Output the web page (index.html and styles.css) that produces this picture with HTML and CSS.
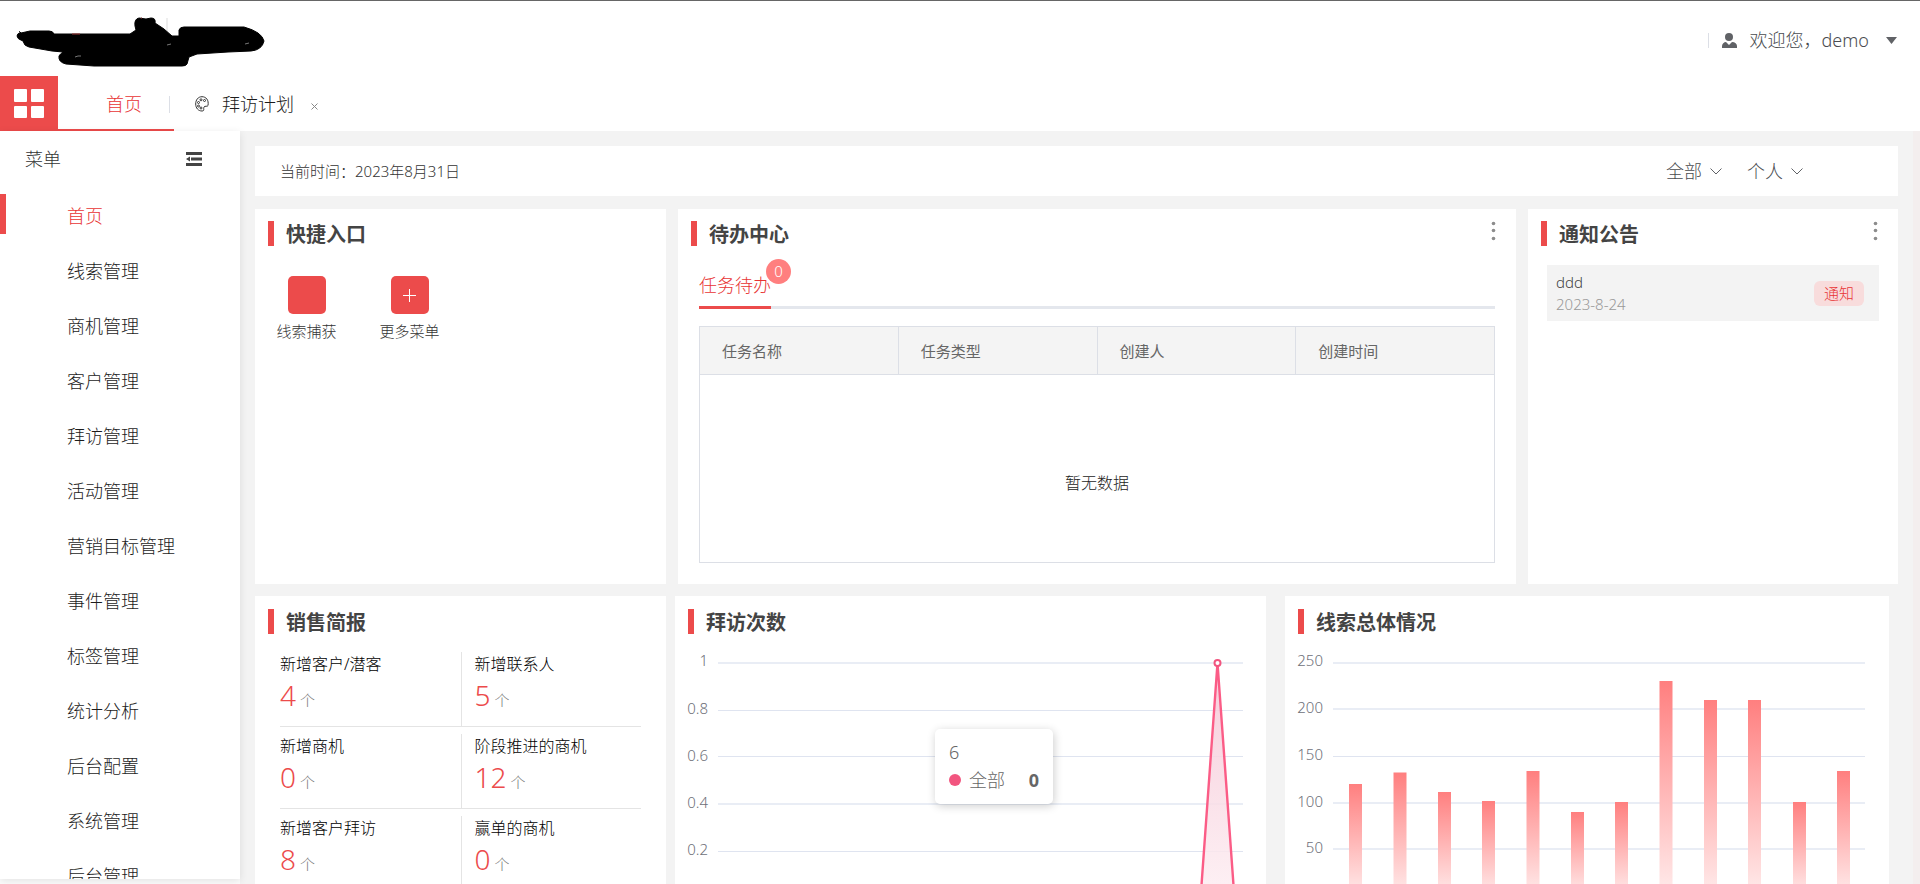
FILE: index.html
```html
<!DOCTYPE html>
<html lang="zh-CN">
<head>
<meta charset="utf-8">
<title>首页</title>
<link rel="stylesheet" href="styles.css">
</head>
<body>
<header class="header">
  <svg class="logo" width="250" height="54" viewBox="0 0 250 54" aria-hidden="true">
    <path d="M151 4v20" stroke="#ddd"/>
    <path d="M5 19Q1 16 5 19L14 17L33 17Q37 17 38 20L114 20L120 16L119 12Q118 5 123 4L130 5L135 4Q140 4 139 9L148 15L156 22L163 22L163 16Q164 13 168 13L228 13Q246 18 248 27Q246 36 235 37L212 38L181 40L173 43L171 50Q170 52 166 52L78 52L50 50Q42 48 43 42Q44 40 47 38L36 37L13 33Q8 32 7 27Q1 25 1 22Q1 19 5 19Z" fill="#000" stroke="#000" stroke-width="1"/>
    <path d="M59 43l3-1h3M151 31l4-1M229 30l4-1" stroke="#777" fill="none"/>
    <path d="M125 4h1M56 20h8" stroke="#933" fill="none"/>
  </svg>
  <button class="user" type="button">
    <svg width="15" height="15" viewBox="0 0 15 15" aria-hidden="true"><circle cx="7" cy="4" r="4"/><path d="M0 15v-2c0-2 2-4 4-4l3 3 3-3c3 0 5 2 5 4v2z"/></svg>
    <span>欢迎您，demo</span>
    <svg class="caret" width="11" height="7" viewBox="0 0 11 7" aria-hidden="true"><path d="M0 0h11L5.500 7z"/></svg>
  </button>
</header>
<nav class="tabs" aria-label="标签页">
  <button class="apps" type="button" aria-label="应用">
    <svg width="30" height="30" viewBox="0 0 30 30"><g fill="#fff"><rect width="13" height="13" rx="1"/><rect x="17" width="13" height="13" rx="1"/><rect y="17" width="13" height="12" rx="1"/><rect x="17" y="17" width="13" height="12" rx="1"/></g></svg>
  </button>
  <a class="tab tab-active" href="#home">首页</a>
  <a class="tab" href="#plan">
    <svg width="14" height="16" viewBox="0 0 14 16" fill="none" stroke="#333" aria-hidden="true"><path d="M13 9.500C14 4 11 .7 7 .7S.7 4 .7 8s2.500 7 6.300 7c3 0 1-2.500 2-4s3.500 0 4-1.500z"/><circle cx="3.500" cy="6.500" r="1"/><circle cx="6" cy="3.800" r="1"/><circle cx="9.500" cy="4.500" r="1"/><circle cx="3.500" cy="10" r="1"/><circle cx="6" cy="12" r="1"/></svg>
    <span>拜访计划</span>
  </a>
  <button class="close" type="button" aria-label="关闭"><svg width="7" height="7" viewBox="0 0 7 7"><path d="M.5.5l6 6m0-6l-6 6" stroke="#888"/></svg></button>
</nav>
<div class="body">
  <aside class="sidebar">
    <div class="side-head">
      <span>菜单</span>
      <button type="button" class="fold" aria-label="折叠菜单"><svg width="16" height="14" viewBox="0 0 16 14" fill="#444"><path d="M0 0h16v3H0zM5 5.500h11v3H5zM0 11h16v3H0zM0 7l4-2.500v5z"/></svg></button>
    </div>
    <nav class="menu">
      <a class="active" href="#1">首页</a>
      <a href="#2">线索管理</a>
      <a href="#3">商机管理</a>
      <a href="#4">客户管理</a>
      <a href="#5">拜访管理</a>
      <a href="#6">活动管理</a>
      <a href="#7">营销目标管理</a>
      <a href="#8">事件管理</a>
      <a href="#9">标签管理</a>
      <a href="#10">统计分析</a>
      <a href="#11">后台配置</a>
      <a href="#12">系统管理</a>
      <a href="#13">后台管理</a>
    </nav>
  </aside>
  <main class="main">
    <div class="filter">
      <span>当前时间：2023年8月31日</span>
      <div class="filter-tools">
        <label class="pick"><select aria-label="范围"><option>全部</option></select><svg width="12" height="7" viewBox="0 0 12 7"><path d="M.5.5L6 6 11.500.5"/></svg></label>
        <label class="pick"><select aria-label="对象"><option>个人</option></select><svg width="12" height="7" viewBox="0 0 12 7"><path d="M.5.5L6 6 11.500.5"/></svg></label>
      </div>
    </div>
    <div class="row row-top">
      <section class="card">
        <h2 class="title">快捷入口</h2>
        <div class="quick">
          <button type="button"><span class="tile"></span>线索捕获</button>
          <button type="button"><span class="tile"><svg width="13" height="13" viewBox="0 0 13 13"><path d="M6.500 0v13M0 6.500h13" stroke="#fff"/></svg></span>更多菜单</button>
        </div>
      </section>
      <section class="card">
        <div class="card-head"><h2 class="title">待办中心</h2>
          <button class="more" type="button" aria-label="更多"><svg width="5" height="20" viewBox="0 0 5 20" fill="#8c8c8c"><circle cx="2.500" cy="2.500" r="1.800"/><circle cx="2.500" cy="9.500" r="1.800"/><circle cx="2.500" cy="17.500" r="1.800"/></svg></button></div>
        <div class="todo">
          <div class="todo-tabs"><button class="todo-tab" type="button">任务待办<span class="badge">0</span></button></div>
          <table class="table">
            <thead><tr><th>任务名称</th><th>任务类型</th><th>创建人</th><th>创建时间</th></tr></thead>
            <tbody><tr><td colspan="4">暂无数据</td></tr></tbody>
          </table>
        </div>
      </section>
      <section class="card">
        <div class="card-head"><h2 class="title">通知公告</h2>
          <button class="more" type="button" aria-label="更多"><svg width="5" height="20" viewBox="0 0 5 20" fill="#8c8c8c"><circle cx="2.500" cy="2.500" r="1.800"/><circle cx="2.500" cy="9.500" r="1.800"/><circle cx="2.500" cy="17.500" r="1.800"/></svg></button></div>
        <a class="notice" href="#notice">
          <span class="notice-text"><span>ddd</span><time>2023-8-24</time></span>
          <span class="tag">通知</span>
        </a>
      </section>
    </div>
    <div class="row row-bottom">
      <section class="card">
        <h2 class="title">销售简报</h2>
        <div class="stats">
          <div class="stat"><span>新增客户/潜客</span><p><b>4</b>个</p></div>
          <div class="stat"><span>新增联系人</span><p><b>5</b>个</p></div>
          <div class="stat"><span>新增商机</span><p><b>0</b>个</p></div>
          <div class="stat"><span>阶段推进的商机</span><p><b>12</b>个</p></div>
          <div class="stat"><span>新增客户拜访</span><p><b>8</b>个</p></div>
          <div class="stat"><span>赢单的商机</span><p><b>0</b>个</p></div>
        </div>
      </section>
      <section class="card chart-card">
        <h2 class="title">拜访次数</h2>
        <svg class="chart" viewBox="0 0 591 275" role="img" aria-label="拜访次数">
          <defs><linearGradient id="area" x1="0" y1="0" x2="0" y2="1"><stop offset="0" stop-color="#f5c4d4"/><stop offset="1" stop-color="#fdeff3"/></linearGradient></defs>
          <g class="soft"><path d="M43 29h525M43 170h525"/></g>
          <g class="crisp"><path d="M43 76.500h525M43 122.500h525M43 217.500h525M43 265.500h525"/></g>
          <g class="axis"><text x="33" y="32">1</text><text x="33" y="80">0.8</text><text x="33" y="127">0.6</text><text x="33" y="174">0.4</text><text x="33" y="221">0.2</text></g>
          <path d="M525.500 265L542.500 29L559.500 265z" fill="url(#area)" fill-opacity=".85"/>
          <path d="M525.500 265L542.500 29L559.500 265" fill="none" stroke="#fb5c86" stroke-width="2.400"/>
          <circle cx="542.500" cy="29" r="3" fill="#fff" stroke="#f2557f" stroke-width="2"/>
        </svg>
        <div class="tooltip"><div>6</div><div class="tip-row"><i></i><span>全部</span><b>0</b></div></div>
      </section>
      <section class="card chart-card">
        <h2 class="title">线索总体情况</h2>
        <svg class="chart" viewBox="0 0 604 275" role="img" aria-label="线索总体情况">
          <defs><linearGradient id="bar" x1="0" y1="0" x2="0" y2="1"><stop offset="0" stop-color="#ff7f7f"/><stop offset="1" stop-color="#ffecec"/></linearGradient></defs>
          <g class="soft"><path d="M48 29h532M48 75h532M48 169h532M48 215h532"/></g>
          <g class="crisp"><path d="M48 122.500h532M48 262.500h532"/></g>
          <g class="axis"><text x="38" y="32">250</text><text x="38" y="79">200</text><text x="38" y="126">150</text><text x="38" y="173">100</text><text x="38" y="219">50</text></g>
          <g fill="url(#bar)">
            <rect x="64" y="150" width="13" height="112"/><rect x="108.500" y="138.500" width="13" height="123.500"/><rect x="153" y="158" width="13" height="104"/><rect x="197" y="167" width="13" height="95"/><rect x="241.500" y="137" width="13" height="125"/><rect x="286" y="178" width="13" height="84"/><rect x="330" y="168" width="13" height="94"/><rect x="374.500" y="47" width="13" height="215"/><rect x="419" y="66" width="13" height="196"/><rect x="463" y="66" width="13" height="196"/><rect x="508" y="168" width="13" height="94"/><rect x="552" y="137" width="13" height="125"/>
          </g>
        </svg>
      </section>
    </div>
  </main>
</div>
</body>
</html>
```
FILE: styles.css
```css
* { box-sizing: border-box; }
body {
  margin: 0;
  height: 100vh;
  display: flex;
  flex-direction: column;
  overflow: hidden;
  background: #fff;
  color: #1c1c1c;
  font: 300 18px/24px "Noto Sans", "Noto Sans CJK SC", sans-serif;
}
button, select { font: inherit; color: inherit; background: none; border: 0; padding: 0; margin: 0; }
a { color: inherit; text-decoration: none; }
svg { display: block; flex: none; }
h2, p { margin: 0; }

.header {
  flex: none;
  height: 76px;
  border-top: 1px solid #666;
  display: flex;
  justify-content: space-between;
  align-items: flex-start;
  padding: 13px 23px 0 16px;
}
.user {
  display: flex;
  align-items: center;
  gap: 13px;
  margin-top: 14px;
  color: #4a4c50;
  fill: #606266;
}
.user::before { content: ""; width: 1px; height: 15px; background: #dcdfe6; }
.user .caret { margin-left: 4px; }

.tabs { flex: none; display: flex; height: 55px; }
.apps { width: 58px; background: #ec4b4b; display: flex; align-items: center; justify-content: center; }
.tab { display: flex; align-items: center; gap: 13px; padding: 1px 0 0 21px; }
.tab-active {
  width: 116px;
  padding: 3px 4px 0 48px;
  justify-content: space-between;
  color: #e83434;
  border-bottom: 2px solid #ec4b4b;
}
.tab-active::after { content: ""; width: 1px; height: 17px; background: #dcdfe6; }
.close { margin: 5px 0 0 17px; }

.body { flex: 1; min-height: 0; display: flex; background: #fcfcfc; }
.sidebar {
  flex: none;
  width: 240px;
  margin-bottom: 5px;
  overflow: hidden;
  background: #fff;
  box-shadow: 0 2px 8px rgba(0, 0, 0, .1);
  z-index: 1;
}
.side-head { display: flex; align-items: center; justify-content: space-between; height: 58px; padding: 0 38px 2px 25px; color: #333; }
.menu a {
  display: block;
  height: 55px;
  line-height: 55px;
  padding-left: 67px;
}
.menu .active {
  color: #e83434;
  background: linear-gradient(#ec4b4b, #ec4b4b) 0 5px / 6px 40px no-repeat;
}

.main {
  flex: 1;
  min-width: 0;
  overflow: hidden;
  padding: 15px 15px 0;
  border-right: 7px solid #f3eeee;
  background: #f3f3f3;
}
.filter {
  display: flex;
  align-items: center;
  justify-content: space-between;
  height: 50px;
  margin-bottom: 13px;
  padding: 0 95px 0 25px;
  background: #fff;
  font-size: 15px;
  color: #333;
}
.filter-tools { display: flex; gap: 25px; font-size: 18px; color: #4a4c50; }
.pick { display: flex; align-items: center; gap: 8px; }
.pick select { appearance: none; }
.pick path { fill: none; stroke: #606266; }

.row { display: grid; }
.row-top { grid-template-columns: 411fr 838fr 370fr; gap: 12px; margin-bottom: 12px; }
.row-bottom { grid-template-columns: 411fr 591fr 614fr; gap: 9px; padding-right: 9px; }
.row-bottom .card:last-child { margin-left: 10px; }
.row-bottom .card { min-height: 320px; }
.card { min-width: 0; padding-top: 12px; background: #fff; }
.card-head { display: flex; justify-content: space-between; align-items: flex-start; padding-right: 20px; }
.title {
  display: flex;
  align-items: flex-start;
  gap: 12px;
  height: 25px;
  padding-left: 13px;
  font-size: 20px;
  font-weight: 700;
  line-height: 28px;
  color: #444;
}
.title::before { content: ""; width: 6px; height: 25px; background: #ec4b4b; }

.quick { display: flex; padding-top: 30px; font-size: 15px; color: #333; }
.quick button { width: 103px; display: flex; flex-direction: column; align-items: center; gap: 5px; }
.tile { width: 38px; height: 38px; border-radius: 5px; background: #ec4b4b; display: flex; align-items: center; justify-content: center; }

.todo { padding: 13px 21px 21px; }
.todo-tabs { display: flex; height: 50px; border-bottom: 3px solid #e4e7ed; margin-bottom: 17px; }
.todo-tab {
  position: relative;
  height: 50px;
  padding: 14px 0 9px;
  border-bottom: 3px solid #ec4b4b;
  color: #e83434;
}
.badge {
  position: absolute;
  left: calc(100% - 5px);
  top: 0;
  width: 25px;
  height: 25px;
  border-radius: 50%;
  background: #ff7f7f;
  color: #fff;
  font-size: 15px;
  line-height: 25px;
  text-align: center;
}
.table {
  width: 100%;
  table-layout: fixed;
  border-collapse: collapse;
  border: 1px solid #dcdfe6;
}
.table th {
  height: 48px;
  padding: 0 0 0 22px;
  border: 1px solid #dcdfe6;
  background: #f4f4f4;
  color: #666;
  font-size: 15px;
  font-weight: 400;
  text-align: left;
}
.table td { height: 188px; padding: 28px 0 0; text-align: center; font-size: 16px; }

.notice {
  display: flex;
  align-items: center;
  justify-content: space-between;
  height: 56px;
  margin: 19px 19px 0;
  padding: 0 15px 0 9px;
  background: #f3f3f3;
  font-size: 15px;
}
.notice-text { display: flex; flex-direction: column; line-height: 22px; color: #444; }
.notice time { color: #999; }
.tag { height: 25px; padding: 0 10px; border-radius: 6px; background: #f8dcdc; color: #e83434; line-height: 25px; }

.row-bottom .card { padding-top: 13px; }
.stats { display: grid; grid-template-columns: 1fr 1fr; row-gap: 7px; padding: 18px 25px 0; }
.stat { height: 75px; border-bottom: 1px solid #e4e4e4; font-size: 16px; color: #000; }
.stat:nth-child(even) { padding-left: 13px; border-left: 1px solid #e4e4e4; }
.stat p { font-size: 15px; line-height: 38px; color: #777; }
.stat b { margin-right: 4px; font-size: 28px; font-weight: 300; color: #ec4b4b; }

.chart-card { position: relative; }
.chart { width: 100%; height: auto; }
.soft { stroke: #e9edf5; stroke-width: 2; }
.crisp { stroke: #dfe4f0; }
.axis { fill: #6e7079; font-size: 15px; text-anchor: end; }
.tooltip {
  position: absolute;
  left: 44%;
  top: 133px;
  width: 118px;
  height: 75px;
  padding: 9px 14px;
  border-radius: 5px;
  background: #fff;
  box-shadow: 1px 2px 10px rgba(0, 0, 0, .2);
  color: #666;
  line-height: 28px;
}
.tip-row { display: flex; align-items: center; }
.tip-row i { width: 12px; height: 12px; margin-right: 8px; border-radius: 50%; background: #f2557f; }
.tip-row b { margin-left: auto; font-weight: 700; }
```
